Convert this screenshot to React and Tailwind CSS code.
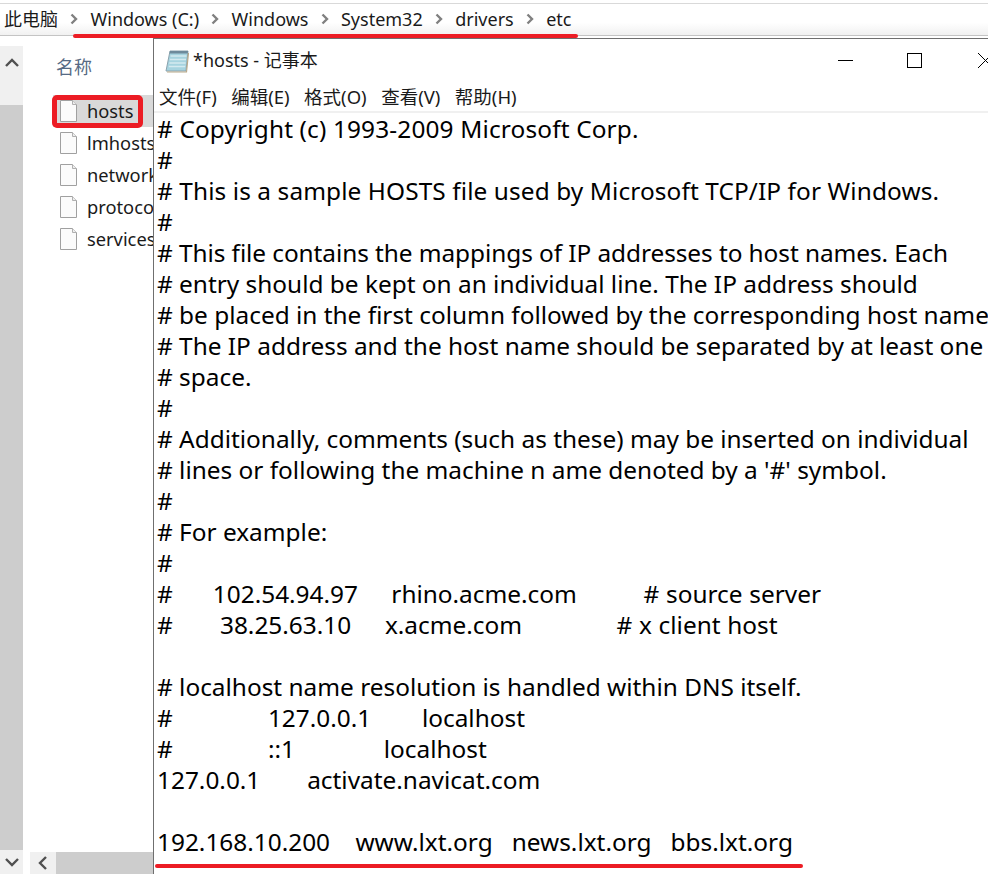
const FONT = "font-['Noto_Sans','Noto_Sans_CJK_SC',sans-serif]";

const CRUMBS = ['此电脑', 'Windows (C:)', 'Windows', 'System32', 'drivers', 'etc'];
const FILES = ['hosts', 'lmhosts', 'networks', 'protocol', 'services'];
const MENUS = ['文件(F)', '编辑(E)', '格式(O)', '查看(V)', '帮助(H)'];

// text, plus a little spacing where a line runs off from the reference width
const LINES = [
  ['# Copyright (c) 1993-2009 Microsoft Corp.', 'tracking-[0.15px]'],
  ['#'],
  ['# This is a sample HOSTS file used by Microsoft TCP/IP for Windows.', 'tracking-[0.1px]'],
  ['#'],
  ['# This file contains the mappings of IP addresses to host names. Each', 'tracking-[-0.07px]'],
  ['# entry should be kept on an individual line. The IP address should'],
  ['# be placed in the first column followed by the corresponding host name.'],
  ['# The IP address and the host name should be separated by at least one'],
  ['# space.'],
  ['#'],
  ['# Additionally, comments (such as these) may be inserted on individual'],
  ["# lines or following the machine n ame denoted by a '#' symbol."],
  ['#'],
  ['# For example:'],
  ['#'],
  ['#      102.54.94.97     rhino.acme.com          # source server', '[word-spacing:0.33px]'],
  ['#       38.25.63.10     x.acme.com              # x client host', '[word-spacing:0.4px]'],
  [''],
  ['# localhost name resolution is handled within DNS itself.'],
  ['#               127.0.0.1        localhost'],
  ['#               ::1              localhost'],
  ['127.0.0.1       activate.navicat.com', '[word-spacing:0.35px]'],
  [''],
  ['192.168.10.200    www.lxt.org   news.lxt.org   bbs.lxt.org'],
];

function Chevron({ dir, className }) {
  const d = {
    up: 'M1 8 L7 2 L13 8',
    down: 'M1 2 L7 8 L13 2',
  }[dir];
  return (
    <svg width="14" height="10" viewBox="0 0 14 10" fill="none" stroke="#505050" strokeWidth="2.4" className={className}>
      <path d={d} />
    </svg>
  );
}

function FileIcon() {
  return (
    <svg width="18" height="22" viewBox="0 0 18 22" className="shrink-0">
      <path d="M0.5 0.5 H12.5 L16.5 4.5 V21.5 H0.5 Z" fill="#fbfbfb" stroke="#a0a0a0" />
      <path d="M12.5 0.5 V4.5 H16.5" fill="#eeeeee" stroke="#b0b0b0" />
    </svg>
  );
}

function NotepadIcon() {
  return (
    <svg width="24" height="24" viewBox="0 0 24 24" className="shrink-0">
      <path d="M5 2 H23 L21 22 H1 Z" fill="#a6d3df" stroke="#8ba3ae" />
      <path d="M5.5 7 H21.5 M4.8 10.5 H21 M4.3 14 H20.6 M3.8 17.5 H20.2" stroke="#d4eaf0" strokeWidth="1.5" />
      <path d="M5 2 H23 L22.7 4.5 H4.6 Z" fill="#6d8a9b" />
      <path d="M2 23 H21.5 L23.5 4" fill="none" stroke="#b9a98a" strokeWidth="1.2" />
    </svg>
  );
}

export default function App() {
  return (
    <div className={`relative flex h-[874px] w-[988px] flex-col overflow-hidden bg-white ${FONT}`}>
      {/* Breadcrumb */}
      <div className="mt-[3px] flex h-[33px] shrink-0 items-center border-y border-t-[#d9d9d9] border-b-[#c4c4c4] bg-gradient-to-b from-white from-60% to-[#f1f1f1] pb-[1px] pl-[4px] text-[18px] leading-none text-[#1a1a1a]">
        {CRUMBS.map((crumb, i) => (
          <div key={crumb} className="flex items-center">
            {i > 0 && (
              <svg width="8" height="12" viewBox="0 0 8 12" fill="none" stroke="#808080" strokeWidth="2.4" className="mx-[12.25px]">
                <path d="M1.5 1.5 L6 6 L1.5 10.5" />
              </svg>
            )}
            <span className="whitespace-pre">{crumb}</span>
          </div>
        ))}
      </div>

      <div className="flex min-h-0 flex-1 pt-[2px]">
        {/* Explorer nav scrollbar */}
        <div className="mt-2 flex w-[23px] shrink-0 flex-col bg-[#f0f0f0]">
          <div className="flex h-[59px] justify-center pt-[12px]">
            <Chevron dir="up" />
          </div>
          <div className="flex-1 bg-[#cdcdcd]" />
          <div className="flex h-[24px] items-center justify-center">
            <Chevron dir="down" />
          </div>
        </div>

        {/* File list */}
        <div className="flex w-[130px] shrink-0 flex-col">
          <div className="flex-1 overflow-hidden pl-[30px] pt-[17px]">
            <div className="pl-[3px] text-[18px] leading-[24px] text-[#566a84]">名称</div>
            <div className="mt-[16px] flex flex-col">
              {FILES.map((name, i) => (
                <div
                  key={name}
                  className={`flex h-[32px] items-center gap-[9px] pl-[7px] text-[18.3px] text-[#1a1a1a] ${i === 0 ? 'bg-[#d9d9d9]' : ''}`}
                >
                  <FileIcon />
                  <span className="whitespace-pre">{name}</span>
                </div>
              ))}
            </div>
          </div>
          <div className="ml-[7px] flex h-[22px] bg-[#cdcdcd]">
            <div className="flex w-[26px] items-center justify-center bg-[#f0f0f0]">
              <svg width="10" height="14" viewBox="0 0 10 14" fill="none" stroke="#505050" strokeWidth="2.4">
                <path d="M8 1 L2 7 L8 13" />
              </svg>
            </div>
          </div>
        </div>

        {/* Notepad window */}
        <div className="relative flex min-w-0 flex-1 flex-col border-l border-t border-[#6f6f6f] bg-white">
          <div className="flex h-[43px] shrink-0 items-center pl-[11px] text-[18px] text-[#1a1a1a]">
            <NotepadIcon />
            <span className="ml-[4px] whitespace-pre">*hosts - 记事本</span>
            <div className="ml-auto flex items-center">
              <div className="mr-[54px] h-px w-[15px] bg-black" />
              <div className="mr-[56px] h-[15px] w-[15px] border border-black" />
              <svg width="10" height="15" viewBox="0 0 10 15" stroke="#000" fill="none">
                <path d="M0 0 L15 15 M0 15 L15 0" />
              </svg>
            </div>
          </div>
          <div className="flex h-[31px] shrink-0 items-center gap-[14.5px] border-b-2 border-[#f0f0f0] pl-[5px] pt-[1px] text-[18.5px] text-[#1a1a1a]">
            {MENUS.map((menu) => (
              <span key={menu} className="whitespace-pre">{menu}</span>
            ))}
          </div>
          <div className="pl-[3px] text-[24.4px] leading-[31px] text-black">
            {LINES.map(([text, spacing], i) => (
              <div key={i} className={`h-[31px] whitespace-pre ${spacing ?? ''}`}>{text}</div>
            ))}
          </div>
        </div>
      </div>

      {/* Red annotations */}
      <div className="absolute left-[73px] top-[34px] h-[4px] w-[505px] rounded-full bg-[#ec1c24]" />
      <div className="absolute left-[52px] top-[95px] h-[33px] w-[91px] rounded-[5px] border-[5px] border-[#ec1c24]" />
      <div className="absolute left-[155px] top-[864px] h-[4px] w-[648px] rounded-full bg-[#ec1c24]" />
    </div>
  );
}
